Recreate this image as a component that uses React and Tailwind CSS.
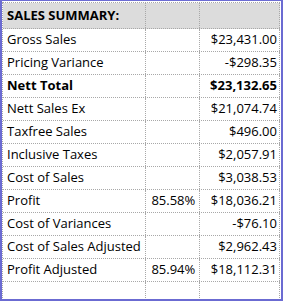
const rows = [
  { label: 'Gross Sales', value: '$23,431.00' },
  { label: 'Pricing Variance', value: '-$298.35' },
  { label: 'Nett Total', value: '$23,132.65', bold: true },
  { label: 'Nett Sales Ex', value: '$21,074.74' },
  { label: 'Taxfree Sales', value: '$496.00' },
  { label: 'Inclusive Taxes', value: '$2,057.91' },
  { label: 'Cost of Sales', value: '$3,038.53' },
  { label: 'Profit', pct: '85.58%', value: '$18,036.21' },
  { label: 'Cost of Variances', value: '-$76.10' },
  { label: 'Cost of Sales Adjusted', value: '$2,962.43' },
  { label: 'Profit Adjusted', pct: '85.94%', value: '$18,112.31' },
];

function Row({ label, pct, value, bold, header, last }) {
  return (
    <div
      className={`flex ${header ? 'h-[26px] bg-[#dcdcdc]' : last ? 'h-[16px]' : 'h-[23px]'} ${
        last ? '' : 'border-b border-dotted border-[#a8a8a8]'
      } ${bold || header ? 'font-bold' : ''}`}
    >
      <div className="flex w-[144px] items-center border-r border-dotted border-[#a8a8a8] pl-[4px]">{label}</div>
      <div className="flex w-[54px] items-center justify-end border-r border-dotted border-[#a8a8a8] pr-[4px]">{pct}</div>
      <div className="flex w-[80px] items-center justify-end border-r border-dotted border-[#a8a8a8] pr-[2px]">{value}</div>
    </div>
  );
}

export default function App() {
  return (
    <div
      className="h-[301px] w-[283px] border-t border-b-2 border-l-2 border-r-2 border-[#6b6bd2] bg-white pt-[1px] pr-[1px] text-[13px] text-black"
      style={{ fontFamily: '"Open Sans", sans-serif' }}
    >
      <div className="border-t border-l border-dotted border-[#a8a8a8]">
        <Row header label="SALES SUMMARY:" />
        {rows.map((r) => (
          <Row key={r.label} {...r} />
        ))}
        <Row last />
      </div>
    </div>
  );
}
